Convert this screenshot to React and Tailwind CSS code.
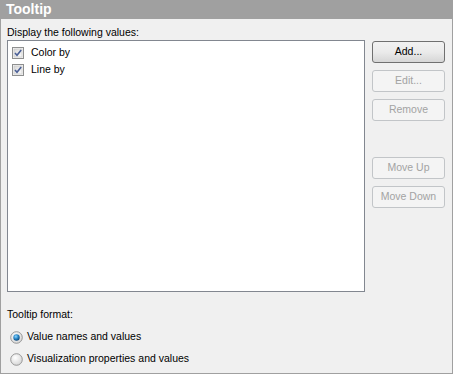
import React from "react";

const font = { fontFamily: '"Liberation Sans", Arial, sans-serif' };

function CheckBox() {
  return (
    <svg width="12" height="12" viewBox="0 0 12 12" className="shrink-0">
      <defs>
        <linearGradient id="cbg" x1="0" y1="0" x2="1" y2="1">
          <stop offset="0" stopColor="#d8d8d8" />
          <stop offset="1" stopColor="#fbfbfb" />
        </linearGradient>
      </defs>
      <rect x="0.5" y="0.5" width="11" height="11" fill="#f4f4f4" stroke="#8e8f8f" />
      <rect x="2" y="2" width="8" height="8" fill="url(#cbg)" stroke="#c4c4c4" strokeWidth="0.6" />
      <path d="M3 6 L5 8.3 L9.2 3" fill="none" stroke="#4a5f97" strokeWidth="1.6" />
    </svg>
  );
}

function Radio({ checked }) {
  return (
    <svg width="13" height="13" viewBox="0 0 13 13" className="shrink-0">
      <defs>
        <radialGradient id="rbg" cx="0.4" cy="0.35" r="0.7">
          <stop offset="0" stopColor="#ffffff" />
          <stop offset="1" stopColor="#d4d4d4" />
        </radialGradient>
        <radialGradient id="rdot" cx="0.4" cy="0.35" r="0.7">
          <stop offset="0" stopColor="#8fd6ff" />
          <stop offset="0.5" stopColor="#2a88c8" />
          <stop offset="1" stopColor="#0b3f6e" />
        </radialGradient>
      </defs>
      <circle cx="6.5" cy="6.5" r="5.8" fill="url(#rbg)" stroke="#8f8f8f" strokeWidth="0.9" />
      {checked && <circle cx="6.5" cy="6.5" r="3.2" fill="url(#rdot)" />}
    </svg>
  );
}

function Btn({ children, enabled, className = "" }) {
  return enabled ? (
    <div
      className={`h-[22px] w-[73px] flex items-center justify-center rounded-[3px] border border-[#707070] bg-gradient-to-b from-[#f2f2f2] via-[#ebebeb] to-[#d6d6d6] text-black text-[10.5px] ${className}`}
    >
      {children}
    </div>
  ) : (
    <div
      className={`h-[22px] w-[73px] flex items-center justify-center rounded-[3px] border border-[#c2c5c8] bg-[#f4f4f4] text-[#a3a3a3] text-[10.5px] ${className}`}
    >
      {children}
    </div>
  );
}

export default function App() {
  return (
    <div
      style={font}
      className="w-[453px] h-[374px] bg-[#f0f0f0] border-x border-b border-[#a0a0a0] flex flex-col text-[10.5px] text-black"
    >
      <div className="h-[19px] -mx-px bg-[#a0a0a0] text-white font-bold text-[14px] leading-[19px] pl-[6px]">
        Tooltip
      </div>
      <div className="px-[6px] flex flex-col">
        <div className="mt-[7px] h-[13px] leading-[13px]">Display the following values:</div>
        <div className="mt-[1px] flex gap-[7px]">
          <div className="w-[358px] h-[252px] bg-white border border-[#828790] pt-[3px] pl-[4px] flex flex-col">
            <div className="h-[17px] flex items-center gap-[7px]">
              <CheckBox />
              <span>Color by</span>
            </div>
            <div className="h-[17px] flex items-center gap-[7px]">
              <CheckBox />
              <span>Line by</span>
            </div>
          </div>
          <div className="flex flex-col pt-[1px]">
            <Btn enabled>Add...</Btn>
            <Btn className="mt-[7px]">Edit...</Btn>
            <Btn className="mt-[7px]">Remove</Btn>
            <Btn className="mt-[36px]">Move Up</Btn>
            <Btn className="mt-[7px]">Move Down</Btn>
          </div>
        </div>
        <div className="mt-[16px] h-[13px] leading-[13px]">Tooltip format:</div>
        <div className="mt-[5px] h-[22px] flex items-center gap-[4px] pl-[3px]">
          <Radio checked />
          <span>Value names and values</span>
        </div>
        <div className="h-[22px] flex items-center gap-[4px] pl-[3px]">
          <Radio />
          <span>Visualization properties and values</span>
        </div>
      </div>
    </div>
  );
}
